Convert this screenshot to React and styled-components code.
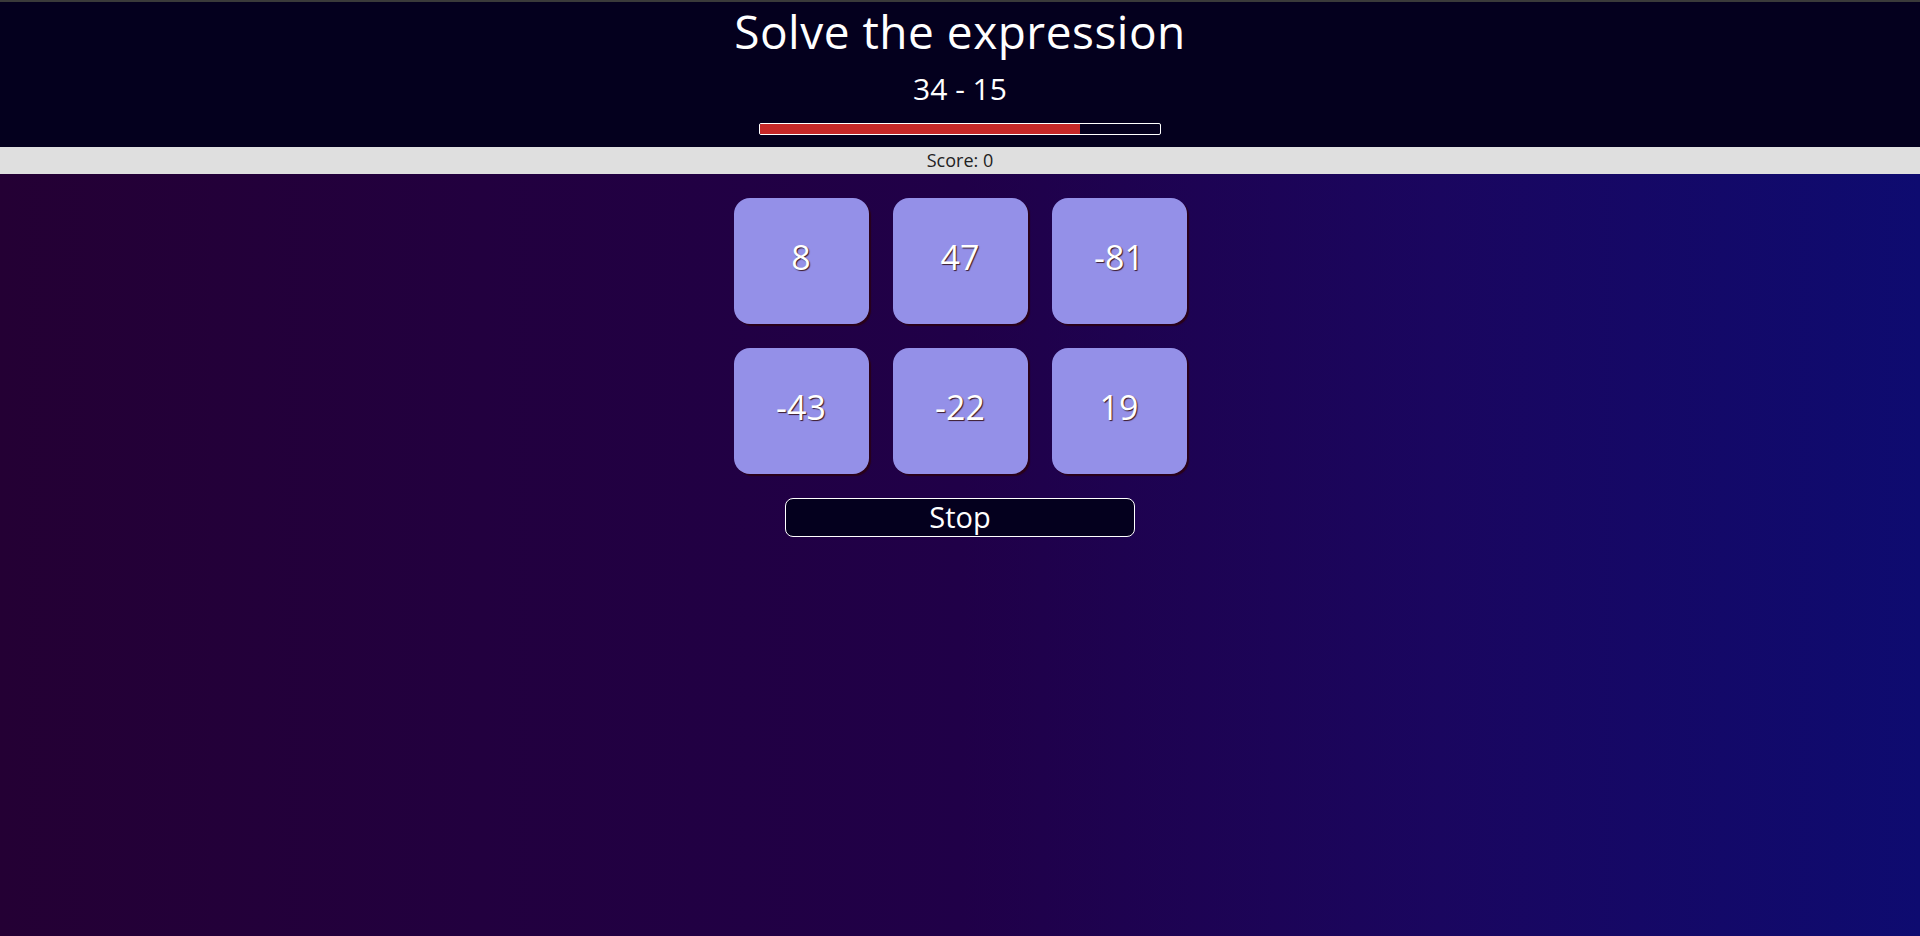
import React from 'react';
import styled, { createGlobalStyle } from 'styled-components';

const GlobalStyle = createGlobalStyle`
  html, body {
    margin: 0;
    padding: 0;
    height: 100%;
  }
  body {
    font-family: "Open Sans", "Liberation Sans", sans-serif;
  }
  #root {
    min-height: 100vh;
    display: flex;
    flex-direction: column;
  }
`

const Page = styled.div`
  display: flex;
  flex-direction: column;
  min-height: 100vh;
  background: linear-gradient(to right, #240034 0%, #22003f 25%, #200048 50%, #1a065f 75%, #0e0b70 100%);
`

const Header = styled.header`
  display: flex;
  flex-direction: column;
  align-items: center;
  background: #04001e;
  border-top: 2px solid #3a3a3a;
  padding-bottom: 12px;
  color: #fff;
`

const Title = styled.h1`
  margin: 0;
  font-size: 46px;
  font-weight: 400;
  line-height: 58px;
  letter-spacing: 0.5px;
`

const Expression = styled.div`
  margin-top: 9px;
  font-size: 30px;
  line-height: 40px;
`

const Timer = styled.div`
  margin-top: 14px;
  width: 400px;
  height: 10px;
  border: 1px solid #fff;
  border-radius: 2px;
  background: #04001e;
  overflow: hidden;
`

const TimerFill = styled.div`
  height: 100%;
  background: #c62828;
`

const ScoreBar = styled.div`
  background: #dfdfdf;
  color: #222;
  height: 27px;
  line-height: 27px;
  text-align: center;
  font-size: 18px;
`

const Board = styled.main`
  display: flex;
  flex-direction: column;
  align-items: center;
  padding-top: 24px;
  gap: 24px;
`

const Grid = styled.div`
  display: grid;
  grid-template-columns: repeat(3, 135px);
  grid-auto-rows: 126px;
  gap: 24px;
`

const Tile = styled.button`
  display: flex;
  align-items: center;
  justify-content: center;
  padding: 0 0 8px;
  border: none;
  border-radius: 16px;
  background: #9490e8;
  box-shadow: 2px 2px 1px #2a0018;
  color: #fff;
  font-family: inherit;
  font-size: 34px;
  text-shadow: 1px 1px 1px #3a1a2a;
  cursor: pointer;
`

const StopButton = styled.button`
  width: 350px;
  height: 39px;
  border: 1px solid #fff;
  border-radius: 8px;
  background: #04001e;
  color: #fff;
  font-family: inherit;
  font-size: 29px;
  line-height: 1;
  padding: 0 0 2px;
  cursor: pointer;
`

const answers = [8, 47, -81, -43, -22, 19];

const App = () => {
  const timeLeft = 0.8;

  return (
    <Page>
      <GlobalStyle />
      <Header>
        <Title>Solve the expression</Title>
        <Expression>34 - 15</Expression>
        <Timer>
          <TimerFill style={{ width: `${timeLeft * 100}%` }} />
        </Timer>
      </Header>
      <ScoreBar>Score: 0</ScoreBar>
      <Board>
        <Grid>
          {answers.map(a => <Tile key={a}>{a}</Tile>)}
        </Grid>
        <StopButton>Stop</StopButton>
      </Board>
    </Page>
  )
}

export default App;
